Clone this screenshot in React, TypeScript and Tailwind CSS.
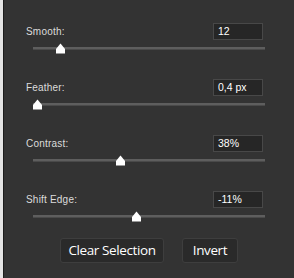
import React from "react";

const rows = [
  { label: "Smooth:", value: "12", pos: 60 },
  { label: "Feather:", value: "0,4 px", pos: 37 },
  { label: "Contrast:", value: "38%", pos: 120 },
  { label: "Shift Edge:", value: "-11%", pos: 136 },
];

function Thumb({ x }: { x: number }) {
  return (
    <svg
      width="11"
      height="11"
      viewBox="0 0 11 11"
      className="absolute top-[-4px]"
      style={{ left: x - 33 - 5.5 }}
    >
      <path d="M5.5 0.5 L10 6 L10 10.5 L1 10.5 L1 6 Z" fill="#ffffff" />
    </svg>
  );
}

export default function App() {
  return (
    <div
      className="flex w-[294px] h-[278px] bg-[#333333]"
      style={{ fontFamily: '"Liberation Sans", Arial, sans-serif' }}
    >
      <div className="w-[3px] bg-[#e4e4e4]" />
      <div className="w-[1px] bg-[#1c1c1c]" />
      <div className="flex-1 flex flex-col pt-[23px]">
        {rows.map((r) => (
          <div key={r.label} className="h-[56px] flex flex-col">
            <div className="flex items-center justify-between pl-[22px] pr-[31px] h-[17px]">
              <span className="text-[10px] text-[#dcdcdc] tracking-[0.2px]">{r.label}</span>
              <div className="w-[50px] h-[17px] bg-[#262626] border border-[#484848] flex items-center pl-[4px] text-[10.5px] text-white">
                {r.value}
              </div>
            </div>
            <div className="relative ml-[29px] mr-[29px] mt-[7px] h-[3px] bg-[#5e5e5e] border-b border-[#4a4a4a]">
              <Thumb x={r.pos} />
            </div>
          </div>
        ))}
        <div className="flex justify-center gap-[18px] mt-[-9px]">
          <button className="w-[104px] h-[25px] rounded-[3px] bg-[#2a2a2a] border border-[#3e3e3e] text-white text-[13.5px] tracking-[-0.4px] leading-none" style={{ fontFamily: '"Open Sans", sans-serif' }}>
            Clear Selection
          </button>
          <button className="w-[56px] h-[25px] rounded-[3px] bg-[#2a2a2a] border border-[#3e3e3e] text-white text-[13.5px] tracking-[-0.4px] leading-none" style={{ fontFamily: '"Open Sans", sans-serif' }}>
            Invert
          </button>
        </div>
      </div>
    </div>
  );
}
